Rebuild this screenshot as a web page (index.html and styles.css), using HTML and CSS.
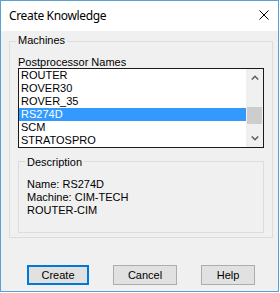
FILE: index.html
```html
<!DOCTYPE html>
<html lang="en">
<head>
    <meta charset="UTF-8">
    <meta name="viewport" content="width=device-width, initial-scale=1.0">
    <title>Create Knowledge</title>
    <link rel="stylesheet" href="styles.css">
</head>
<body>
    <div class="window">
        <div class="titlebar">
            <span class="title">Create Knowledge</span>
            <svg class="close" width="10" height="10" viewBox="0 0 10 10">
                <path d="M0.5 0.5 L9.5 9.5 M9.5 0.5 L0.5 9.5" stroke="#000" stroke-width="1" fill="none"/>
            </svg>
        </div>
        <div class="client">
            <div class="group machines">
                <div class="group-title">Machines</div>
                <div class="field-label">Postprocessor Names</div>
                <div class="listbox">
                    <ul class="items">
                        <li>ROUTER</li>
                        <li>ROVER30</li>
                        <li>ROVER_35</li>
                        <li class="selected">RS274D</li>
                        <li>SCM</li>
                        <li>STRATOSPRO</li>
                    </ul>
                    <div class="scrollbar">
                        <div class="sb-btn">
                            <svg width="8" height="5" viewBox="0 0 8 5"><polyline points="0.8,4.5 4,1.3 7.2,4.5" fill="none" stroke="#606060" stroke-width="1.6"/></svg>
                        </div>
                        <div class="sb-track"><div class="sb-thumb"></div></div>
                        <div class="sb-btn">
                            <svg width="8" height="5" viewBox="0 0 8 5"><polyline points="0.8,0.5 4,3.7 7.2,0.5" fill="none" stroke="#606060" stroke-width="1.6"/></svg>
                        </div>
                    </div>
                </div>
                <div class="group description">
                    <div class="group-title">Description</div>
                    <div class="desc-text">
                        Name: RS274D<br>
                        Machine: CIM-TECH<br>
                        ROUTER-CIM
                    </div>
                </div>
            </div>
            <div class="buttons">
                <button class="btn btn-default btn-create">Create</button>
                <button class="btn btn-cancel">Cancel</button>
                <button class="btn btn-help">Help</button>
            </div>
        </div>
    </div>
</body>
</html>
```

FILE: styles.css
```css
body {
    margin: 0;
    padding: 0;
    background-color: #fff;
    font-family: "Liberation Sans", Arial, sans-serif;
    font-size: 11px;
    color: #000;
}
.window {
    width: 279px;
    height: 292px;
    box-sizing: border-box;
    border: 1px solid #5aa0d5;
    background-color: #f0f0f0;
}
.titlebar {
    height: 30px;
    background-color: #fff;
    display: flex;
    justify-content: space-between;
    align-items: flex-start;
}
.title {
    font-family: "Noto Sans", sans-serif;
    font-size: 12px;
    letter-spacing: -0.35px;
    line-height: 16px;
    margin: 7px 0 0 8px;
}
.close {
    margin: 9px 9px 0 0;
}
.group {
    box-sizing: border-box;
    border: 1px solid #dcdcdc;
}
.group-title {
    width: fit-content;
    padding: 0 2px;
    margin-left: -2px;
    line-height: 13px;
    background-color: #f0f0f0;
}
.machines {
    width: 264px;
    height: 197px;
    margin: 10px 0 0 8px;
    padding: 0 8px;
}
.machines > .group-title {
    margin-top: -8px;
}
.field-label {
    margin-top: 9px;
    line-height: 12px;
}
.listbox {
    display: flex;
    height: 80px;
    box-sizing: border-box;
    border: 1px solid #1a1a1a;
    background-color: #fff;
}
.items {
    list-style: none;
    margin: 0;
    padding: 0;
    flex: 1;
}
.items li {
    height: 13px;
    line-height: 13px;
    padding-left: 2px;
}
.items li.selected {
    background-color: #3399ff;
    color: #fff;
}
.scrollbar {
    width: 17px;
    display: flex;
    flex-direction: column;
    background-color: #f0f0f0;
}
.sb-btn {
    height: 17px;
    display: flex;
    align-items: center;
    justify-content: center;
}
.sb-track {
    flex: 1;
}
.sb-thumb {
    width: 15px;
    height: 17px;
    margin: 21px 0 0 1px;
    background-color: #cdcdcd;
}
.description {
    width: 100%;
    height: 72px;
    margin-top: 13px;
    padding: 0 8px;
}
.description > .group-title {
    margin-top: -6px;
}
.desc-text {
    margin-top: 9px;
    line-height: 13px;
}
.buttons {
    display: flex;
    gap: 24px;
    margin-top: 27px;
    padding-left: 26px;
}
.btn {
    height: 20px;
    box-sizing: border-box;
    padding: 0;
    font-family: "Liberation Sans", Arial, sans-serif;
    font-size: 11px;
    color: #000;
    background-color: #e1e1e1;
    border: 1px solid #adadad;
}
.btn-default {
    border: 2px solid #0078d7;
}
.btn-create {
    width: 62px;
}
.btn-cancel {
    width: 64px;
}
.btn-help {
    width: 54px;
}
```
